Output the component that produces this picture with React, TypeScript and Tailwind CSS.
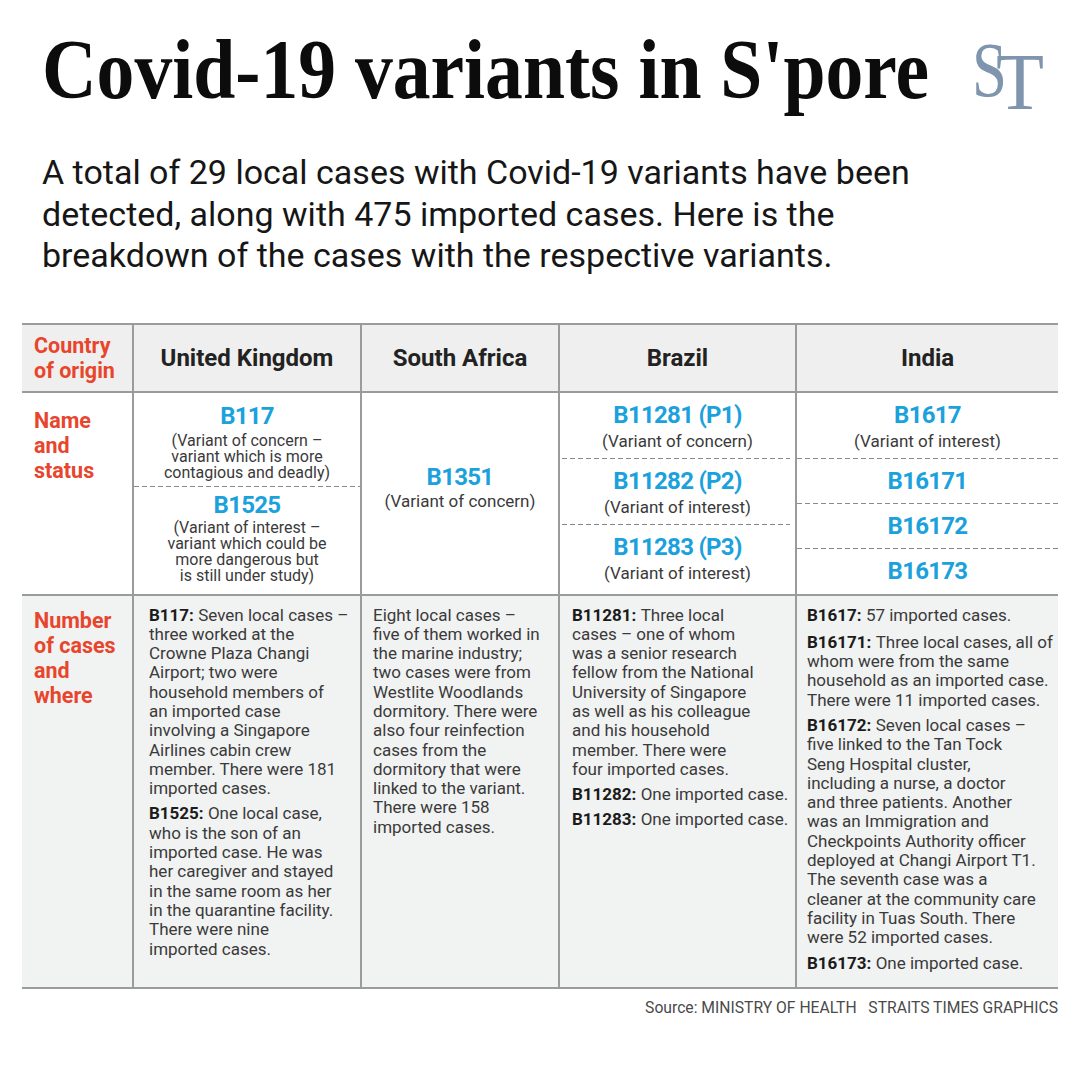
import React from "react"

const dash = "h-px bg-[repeating-linear-gradient(90deg,#8a8a8a_0_5px,transparent_5px_8px)]"

function Dashed({ className = "" }: { className?: string }) {
  return <div className={`${dash} ${className}`} />
}

function Name({ children }: { children: React.ReactNode }) {
  return <div className="text-[24px] leading-[26px] font-bold tracking-[-0.03em] text-[#1ba1dc]">{children}</div>
}

function Lines({ lines }: { lines: string[] }) {
  return (
    <>
      {lines.map((l, i) => (
        <div key={i} className="whitespace-nowrap">
          {l}
        </div>
      ))}
    </>
  )
}

function Para({ label, lines, className = "" }: { label?: string; lines: string[]; className?: string }) {
  return (
    <div className={className}>
      {lines.map((l, i) => (
        <div key={i} className="whitespace-nowrap">
          {i === 0 && label ? <b className="font-bold text-[#1b1b1b]">{label} </b> : null}
          {l}
        </div>
      ))}
    </div>
  )
}

export default function App() {
  return (
    <div className="w-[1080px] h-[1080px] bg-white px-[22px] font-[Roboto,sans-serif] overflow-hidden">
      {/* heading */}
      <div className="flex justify-between items-start pt-[28px]">
        <h1 className="ml-[20px] w-[890px] shrink-0 text-[84px] leading-[84px] font-bold text-[#0c0c0c] font-['Liberation_Serif',serif] whitespace-nowrap">
          <span className="inline-block origin-left scale-x-[0.9]">Covid-19 variants in S'pore</span>
        </h1>
        <svg width="80" height="72" viewBox="0 0 80 72" overflow="visible" className="shrink-0 mt-[12px] mr-[8px]">
          <text x="2" y="56" fontSize="78" fontFamily="Liberation Serif, serif" fill="#7f95ad" textLength="35" lengthAdjust="spacingAndGlyphs">
            S
          </text>
          <text x="26" y="69" fontSize="80" fontFamily="Liberation Serif, serif" fill="#7f95ad" textLength="48" lengthAdjust="spacingAndGlyphs">
            T
          </text>
        </svg>
      </div>

      <div className="ml-[20px] mt-[40px] text-[34px] leading-[41.5px] text-[#161616]">
        <Lines
          lines={[
            "A total of 29 local cases with Covid-19 variants have been",
            "detected, along with 475 imported cases. Here is the",
            "breakdown of the cases with the respective variants.",
          ]}
        />
      </div>

      {/* table */}
      <div className="mt-[46px] w-[1036px]">
        <div className="grid grid-cols-[110px_228px_198px_237px_263px] h-[68px] border-t-2 border-[#9b9b9b] bg-[#efefef]">
          <div className="pl-3 flex flex-col justify-center text-[21.5px] leading-[25px] font-bold text-[#e8452d]">
            <div>Country</div>
            <div>of origin</div>
          </div>
          {["United Kingdom", "South Africa", "Brazil", "India"].map((c) => (
            <div key={c} className="border-l-2 border-[#9b9b9b] flex items-center justify-center text-[24px] font-bold text-[#222]">
              {c}
            </div>
          ))}
        </div>

        <div className="grid grid-cols-[110px_228px_198px_237px_263px] h-[203px] border-t-2 border-[#9b9b9b] bg-white text-[#3a3a3a]">
          <div className="pl-3 pt-[15px] text-[21.5px] leading-[25px] font-bold text-[#e8452d]">
            <div>Name</div>
            <div>and</div>
            <div>status</div>
          </div>

          <div className="border-l-2 border-[#9b9b9b] flex flex-col text-center">
            <div className="pt-[10px] pb-[5px]">
              <Name>B117</Name>
              <div className="mt-[4px] text-[16px] leading-[16px]">
                <Lines lines={["(Variant of concern –", "variant which is more", "contagious and deadly)"]} />
              </div>
            </div>
            <Dashed />
            <div className="pt-[5px]">
              <Name>B1525</Name>
              <div className="mt-[2px] text-[16px] leading-[16px]">
                <Lines
                  lines={["(Variant of interest –", "variant which could be", "more dangerous but", "is still under study)"]}
                />
              </div>
            </div>
          </div>

          <div className="border-l-2 border-[#9b9b9b] flex flex-col items-center justify-center pb-[12px] text-center">
            <Name>B1351</Name>
            <div className="mt-[2px] text-[17px] leading-[18px]">(Variant of concern)</div>
          </div>

          <div className="border-l-2 border-[#9b9b9b] flex flex-col text-center">
            {[
              ["B11281 (P1)", "(Variant of concern)"],
              ["B11282 (P2)", "(Variant of interest)"],
              ["B11283 (P3)", "(Variant of interest)"],
            ].map(([n, s], i) => (
              <React.Fragment key={n}>
                {i > 0 && <Dashed className="ml-[2px] mr-[5px]" />}
                <div className="h-[65px] pt-[9px]">
                  <Name>{n}</Name>
                  <div className="mt-[4px] text-[17px] leading-[18px]">{s}</div>
                </div>
              </React.Fragment>
            ))}
          </div>

          <div className="border-l-2 border-[#9b9b9b] flex flex-col text-center">
            <div className="h-[65px] pt-[9px]">
              <Name>B1617</Name>
              <div className="mt-[4px] text-[17px] leading-[18px]">(Variant of interest)</div>
            </div>
            {["B16171", "B16172", "B16173"].map((n) => (
              <React.Fragment key={n}>
                <Dashed />
                <div className="flex-1 flex items-center justify-center">
                  <Name>{n}</Name>
                </div>
              </React.Fragment>
            ))}
          </div>
        </div>

        <div className="grid grid-cols-[110px_228px_198px_237px_263px] h-[395px] border-y-2 border-[#9b9b9b] bg-[#f1f2f2] text-[17px] leading-[19.3px] text-[#3a3a3a]">
          <div className="pl-3 pt-[12px] text-[21.5px] leading-[25px] font-bold text-[#e8452d]">
            <div>Number</div>
            <div>of cases</div>
            <div>and</div>
            <div>where</div>
          </div>

          <div className="border-l-2 border-[#9b9b9b] pl-[15px] pt-[10px]">
            <Para
              label="B117:"
              lines={[
                "Seven local cases –",
                "three worked at the",
                "Crowne Plaza Changi",
                "Airport; two were",
                "household members of",
                "an imported case",
                "involving a Singapore",
                "Airlines cabin crew",
                "member. There were 181",
                "imported cases.",
              ]}
            />
            <Para
              className="mt-[6px]"
              label="B1525:"
              lines={[
                "One local case,",
                "who is the son of an",
                "imported case. He was",
                "her caregiver and stayed",
                "in the same room as her",
                "in the quarantine facility.",
                "There were nine",
                "imported cases.",
              ]}
            />
          </div>

          <div className="border-l-2 border-[#9b9b9b] pl-[11px] pt-[10px]">
            <Para
              lines={[
                "Eight local cases –",
                "five of them worked in",
                "the marine industry;",
                "two cases were from",
                "Westlite Woodlands",
                "dormitory. There were",
                "also four reinfection",
                "cases from the",
                "dormitory that were",
                "linked to the variant.",
                "There were 158",
                "imported cases.",
              ]}
            />
          </div>

          <div className="border-l-2 border-[#9b9b9b] pl-[12px] pt-[10px]">
            <Para
              label="B11281:"
              lines={[
                "Three local",
                "cases – one of whom",
                "was a senior research",
                "fellow from the National",
                "University of Singapore",
                "as well as his colleague",
                "and his household",
                "member. There were",
                "four imported cases.",
              ]}
            />
            <Para className="mt-[6px]" label="B11282:" lines={["One imported case."]} />
            <Para className="mt-[6px]" label="B11283:" lines={["One imported case."]} />
          </div>

          <div className="border-l-2 border-[#9b9b9b] pl-[10px] pt-[10px]">
            <Para label="B1617:" lines={["57 imported cases."]} />
            <Para
              className="mt-[8px]"
              label="B16171:"
              lines={[
                "Three local cases, all of",
                "whom were from the same",
                "household as an imported case.",
                "There were 11 imported cases.",
              ]}
            />
            <Para
              className="mt-[6px]"
              label="B16172:"
              lines={[
                "Seven local cases –",
                "five linked to the Tan Tock",
                "Seng Hospital cluster,",
                "including a nurse, a doctor",
                "and three patients. Another",
                "was an Immigration and",
                "Checkpoints Authority officer",
                "deployed at Changi Airport T1.",
                "The seventh case was a",
                "cleaner at the community care",
                "facility in Tuas South. There",
                "were 52 imported cases.",
              ]}
            />
            <Para className="mt-[6px]" label="B16173:" lines={["One imported case."]} />
          </div>
        </div>

        <div className="mt-[9px] text-right text-[15.7px] leading-[20px] text-[#4a4a4a] whitespace-pre">
          Source: MINISTRY OF HEALTH   STRAITS TIMES GRAPHICS
        </div>
      </div>
    </div>
  )
}
